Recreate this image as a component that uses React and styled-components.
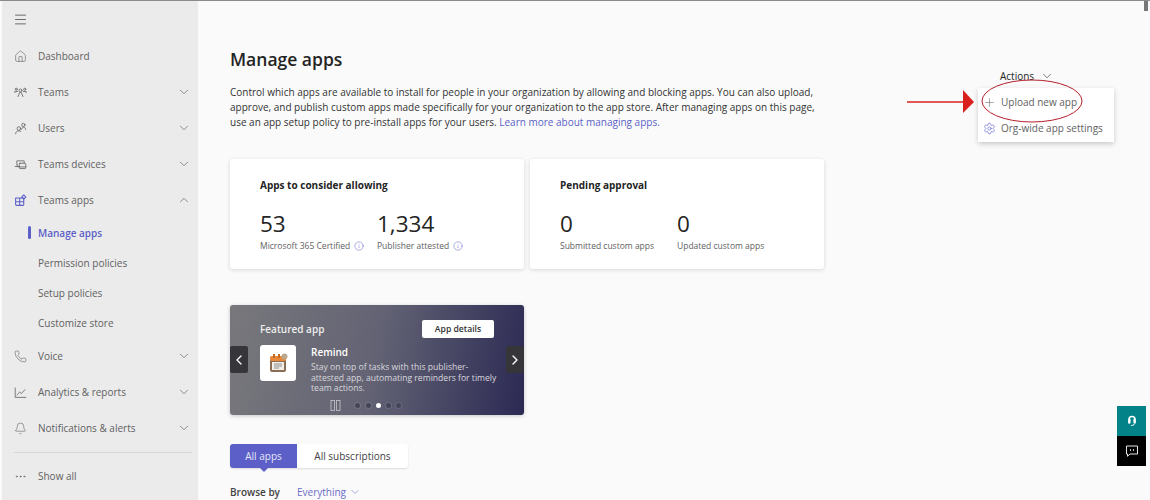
import React from 'react'
import styled, { createGlobalStyle } from 'styled-components'
import { ChevronDown, ChevronUp, ChevronLeft, ChevronRight, Home, Phone, Bell, Plus, Settings, Info, Menu, MoreHorizontal } from 'lucide-react'

const GlobalStyle = createGlobalStyle`
  html, body { margin: 0; padding: 0; height: 100%; overflow: hidden; }
  body { font-family: "Open Sans", "Noto Sans", sans-serif; color: #242424; background: #fafafa; }
`

const Page = styled.div`
  width: 1150px;
  height: 500px;
  display: flex;
  position: relative;
  overflow: hidden;
  border-top: 1px solid #8a8a8a;
  box-sizing: border-box;
`

const Sidebar = styled.nav`
  width: 196px;
  margin-left: 2px;
  flex-shrink: 0;
  background: #ebebeb;
  padding: 9px 0 0 0;
  box-sizing: border-box;
`

const MenuButton = styled.div`
  height: 18px;
  padding-left: 11px;
  margin-bottom: 10px;
  display: flex;
  align-items: center;
  color: #424242;
`

const NavRow = styled.div`
  height: 36px;
  display: flex;
  align-items: center;
  padding: 0 7px 0 12px;
  font-size: 10px;
  color: #616161;
`

const NavIcon = styled.span`
  width: 24px;
  display: flex;
  align-items: center;
  color: ${p => (p.$active ? '#5b5fc7' : '#616161')};
`

const NavLabel = styled.span`
  flex: 1;
`

const SubRow = styled.div`
  height: 30px;
  display: flex;
  align-items: center;
  padding-left: 36px;
  font-size: 10px;
  position: relative;
  color: ${p => (p.$active ? '#5b5fc7' : '#616161')};
  font-weight: ${p => (p.$active ? 600 : 400)};
`

const ActiveBar = styled.span`
  position: absolute;
  left: 26px;
  top: 8px;
  width: 3px;
  height: 13px;
  border-radius: 2px;
  background: #5b5fc7;
`

const Divider = styled.div`
  height: 1px;
  background: #d6d6d6;
  margin: 6px 6px 5px 12px;
`

const Main = styled.main`
  flex: 1;
  padding: 46px 0 0 32px;
  min-width: 0;
`

const Title = styled.h1`
  margin: 0 0 14px;
  font-size: 17.5px;
  line-height: 24px;
  font-weight: 600;
`

const Intro = styled.p`
  margin: 0 0 29px;
  width: 600px;
  font-size: 10px;
  line-height: 15px;
  color: #333;
`

const IntroLink = styled.span`
  color: #5b5fc7;
`

const CardRow = styled.div`
  display: flex;
  gap: 6px;
  margin-bottom: 36px;
`

const Card = styled.section`
  width: 294px;
  height: 110px;
  background: #fff;
  border-radius: 3px;
  box-shadow: 0 1px 4px rgba(0, 0, 0, 0.14);
  padding: 19px 30px 0;
  box-sizing: border-box;
`

const CardTitle = styled.h2`
  margin: 0 0 17px;
  font-size: 10px;
  line-height: 14px;
  font-weight: 700;
`

const Stats = styled.div`
  display: flex;
`

const Stat = styled.div`
  width: ${p => p.$w}px;
`

const StatValue = styled.div`
  font-size: 22.5px;
  line-height: 30px;
  font-weight: 500;
  color: #242424;
`

const StatLabel = styled.div`
  display: flex;
  align-items: center;
  gap: 4px;
  margin-top: 1px;
  font-size: 8.5px;
  line-height: 12px;
  color: #616161;
  white-space: nowrap;
`

const InfoMark = styled(Info)`
  color: #5b5fc7;
`

const Featured = styled.section`
  width: 294px;
  height: 110px;
  border-radius: 3px;
  background: linear-gradient(100deg, #78787c 0%, #626274 50%, #2b2953 100%);
  box-shadow: 0 1px 4px rgba(0, 0, 0, 0.2);
  box-sizing: border-box;
  padding: 15px 30px 0;
  position: relative;
  color: #fff;
  margin-bottom: 28px;
`

const FeaturedHead = styled.div`
  display: flex;
  justify-content: space-between;
  align-items: center;
  margin-bottom: 6px;
`

const FeaturedTitle = styled.span`
  font-size: 10px;
  font-weight: 600;
  color: #eee;
`

const DetailsButton = styled.div`
  width: 72px;
  height: 18px;
  background: #fff;
  border-radius: 2px;
  color: #333;
  font-size: 8.6px;
  font-weight: 600;
  display: flex;
  align-items: center;
  justify-content: center;
`

const FeaturedBody = styled.div`
  display: flex;
  gap: 15px;
`

const AppTile = styled.div`
  width: 36px;
  height: 36px;
  margin-top: 1px;
  border-radius: 3px;
  background: #fff;
  flex-shrink: 0;
  display: flex;
  align-items: center;
  justify-content: center;
`

const AppName = styled.div`
  font-size: 10px;
  line-height: 12px;
  font-weight: 600;
  margin: 2px 0 4px;
`

const AppText = styled.div`
  font-size: 8.6px;
  line-height: 10.5px;
  color: #d8d8de;
  width: 190px;
`

const Arrow = styled.div`
  position: absolute;
  top: 41px;
  ${p => (p.$right ? 'right: 0;' : 'left: 0;')}
  width: 18px;
  height: 27px;
  background: #35353a;
  border-radius: 2px;
  display: flex;
  align-items: center;
  justify-content: center;
`

const Pager = styled.div`
  position: absolute;
  left: 100px;
  bottom: 4px;
  display: flex;
  align-items: center;
  gap: 5.3px;
`

const PauseMark = styled.svg`
  margin-right: 9px;
`

const Dot = styled.span`
  width: 5px;
  height: 5px;
  border-radius: 50%;
  background: ${p => (p.$on ? '#fff' : '#454558')};
  box-shadow: ${p => (p.$on ? 'none' : '0 0 0 1px rgba(255, 255, 255, 0.1)')};
`

const Tabs = styled.div`
  display: inline-flex;
  height: 24px;
  background: #fff;
  border-radius: 3px;
  box-shadow: 0 1px 2px rgba(0, 0, 0, 0.12);
  position: relative;
  margin-bottom: 17px;
`

const Tab = styled.div`
  width: ${p => p.$w}px;
  display: flex;
  align-items: center;
  justify-content: center;
  font-size: 10px;
  border-radius: ${p => (p.$on ? '3px 0 0 3px' : '0 3px 3px 0')};
  background: ${p => (p.$on ? '#5b5fc7' : 'transparent')};
  color: ${p => (p.$on ? '#e6e6f7' : '#424242')};
  position: relative;
  &::after {
    content: ${p => (p.$on ? "''" : 'none')};
    position: absolute;
    left: 50%;
    bottom: -4px;
    margin-left: -4px;
    border: 4px solid transparent;
    border-bottom: 0;
    border-top-color: #5b5fc7;
  }
`

const BrowseRow = styled.div`
  display: flex;
  align-items: center;
  font-size: 10px;
`

const BrowseLabel = styled.span`
  font-weight: 600;
  width: 67px;
  color: #424242;
`

const BrowseValue = styled.span`
  display: flex;
  align-items: center;
  gap: 3px;
  color: #6a6dc9;
`

const ActionsToggle = styled.div`
  position: absolute;
  left: 1000px;
  top: 68px;
  display: flex;
  align-items: center;
  gap: 6px;
  font-size: 10px;
  color: #242424;
`

const Dropdown = styled.div`
  position: absolute;
  left: 978px;
  top: 87px;
  width: 136px;
  height: 54px;
  background: #fff;
  box-shadow: 0 2px 5px rgba(0, 0, 0, 0.2);
  box-sizing: border-box;
  padding-top: 1px;
`

const DropItem = styled.div`
  height: 26px;
  display: flex;
  align-items: center;
  gap: 5px;
  padding-left: 5px;
  font-size: 10px;
  color: #616161;
  white-space: nowrap;
`

const Callout = styled.svg`
  position: absolute;
  left: 900px;
  top: 76px;
`

const Floating = styled.div`
  position: absolute;
  left: 1117px;
  top: 405px;
  width: 29px;
`

const FloatButton = styled.div`
  height: 30px;
  display: flex;
  align-items: center;
  justify-content: center;
  color: #fff;
  background: ${p => p.$bg};
`

const ScrollThumb = styled.div`
  position: absolute;
  left: 1144px;
  top: 0;
  width: 4px;
  height: 10px;
  background: #777;
`

const Line = ({ children, size = 13 }) => (
  <svg width={size} height={size} viewBox="0 0 16 16" fill="none" stroke="currentColor" strokeWidth="1" strokeLinecap="round" strokeLinejoin="round">
    {children}
  </svg>
)

const TeamsIcon = () => (
  <Line>
    <circle cx="8" cy="5.5" r="1.8" />
    <path d="M5 13l2-5h2l2 5" />
    <circle cx="2.8" cy="4" r="1.3" />
    <circle cx="13.2" cy="4" r="1.3" />
    <path d="M1 8V6.8h3.4M15 8V6.8h-3.4" />
  </Line>
)

const UsersIcon = () => (
  <Line>
    <circle cx="6" cy="8" r="2.2" />
    <path d="M2 14.5c0-2.4 1.6-3.6 4-3.6 1 0 1.8.2 2.4.6" />
    <circle cx="11.5" cy="3.6" r="2" />
    <path d="M9.5 9c.3-1.6 1-2.6 2-2.6 1.6 0 2.8 1 2.8 2.8" />
  </Line>
)

const DevicesIcon = () => (
  <Line>
    <path d="M3.5 8V3.5h9V6" />
    <path d="M1.5 10.5h5M4 8.5v2" />
    <rect x="6.5" y="6.5" width="8" height="6.5" rx="1" />
    <path d="M6.5 11h8" />
  </Line>
)

const AppsIcon = () => (
  <Line>
    <path d="M2 5h5v4.5H2zM2 9.5h5V14H3a1 1 0 0 1-1-1zM7 9.5h5V13a1 1 0 0 1-1 1H7zM7 5h5v4.5H7z" strokeWidth="1.3" />
    <path d="M12 1.2l2.6 2.6L12 6.4 9.4 3.8z" strokeWidth="1.3" />
  </Line>
)

const ChartIcon = () => (
  <Line>
    <path d="M1.5 2.5V14h13" />
    <path d="M3.5 11l3.5-3.5 2 1.7 4.500-4.700" />
  </Line>
)

const NAV_TOP = [
  { label: 'Dashboard', icon: <Home size={13} strokeWidth={1.1} />, noChevron: true },
  { label: 'Teams', icon: <TeamsIcon /> },
  { label: 'Users', icon: <UsersIcon /> },
  { label: 'Teams devices', icon: <DevicesIcon /> },
]

const NAV_BOTTOM = [
  { label: 'Voice', icon: <Phone size={13} strokeWidth={1.1} /> },
  { label: 'Analytics & reports', icon: <ChartIcon /> },
  { label: 'Notifications & alerts', icon: <Bell size={13} strokeWidth={1.1} /> },
]

const NavItem = ({ item }) => (
  <NavRow>
    <NavIcon>{item.icon}</NavIcon>
    <NavLabel>{item.label}</NavLabel>
    {!item.noChevron && <ChevronDown size={14} strokeWidth={1.2} />}
  </NavRow>
)

const RemindIcon = () => (
  <svg width="22" height="22" viewBox="0 0 22 22">
    <rect x="3" y="5" width="16" height="15" rx="2" fill="#8a6d52" />
    <rect x="5" y="10" width="12" height="8" fill="#f2efe9" />
    <rect x="3" y="4" width="16" height="5" rx="1.5" fill="#e8893a" />
    <rect x="6" y="2" width="2" height="4" fill="#c46a22" />
    <rect x="11" y="2" width="2" height="4" fill="#c46a22" />
    <circle cx="17.5" cy="4.5" r="3" fill="#b9a78f" />
    <path d="M7 12h8M7 14h8M7 16h5" stroke="#777" strokeWidth="0.8" />
  </svg>
)

const HeadsetIcon = () => (
  <svg width="14" height="14" viewBox="0 0 14 14" fill="none" stroke="#fff" strokeLinecap="round">
    <path d="M4 9V5.5a3 3 0 0 1 6 0V8" strokeWidth="1.5" />
    <path d="M4.5 5.5v3M9.5 5.5v3" strokeWidth="2.2" />
    <path d="M10 8.5c0 2-1.5 3-3.5 3" strokeWidth="1" />
  </svg>
)

const ChatIcon = () => (
  <svg width="14" height="14" viewBox="0 0 14 14" fill="none" stroke="#fff" strokeWidth="0.9" strokeLinejoin="round">
    <path d="M1.5 2h11v8H5l-2.5 2.3V10h-1z" />
    <path d="M5 6h1M8 6h1" strokeWidth="1.3" />
  </svg>
)

export default function App() {
  return (
    <Page>
      <GlobalStyle />
      <Sidebar>
        <MenuButton><Menu size={15} strokeWidth={1.2} /></MenuButton>
        {NAV_TOP.map(item => <NavItem key={item.label} item={item} />)}
        <NavRow>
          <NavIcon $active><AppsIcon /></NavIcon>
          <NavLabel>Teams apps</NavLabel>
          <ChevronUp size={14} strokeWidth={1.2} />
        </NavRow>
        <SubRow $active><ActiveBar />Manage apps</SubRow>
        <SubRow>Permission policies</SubRow>
        <SubRow>Setup policies</SubRow>
        <SubRow>Customize store</SubRow>
        {NAV_BOTTOM.map(item => <NavItem key={item.label} item={item} />)}
        <Divider />
        <NavItem item={{ label: 'Show all', icon: <MoreHorizontal size={13} strokeWidth={1.2} />, noChevron: true }} />
      </Sidebar>

      <Main>
        <Title>Manage apps</Title>
        <Intro>
          Control which apps are available to install for people in your organization by allowing and blocking apps. You can also upload,
          approve, and publish custom apps made specifically for your organization to the app store. After managing apps on this page,
          use an app setup policy to pre-install apps for your users. <IntroLink>Learn more about managing apps.</IntroLink>
        </Intro>

        <CardRow>
          <Card>
            <CardTitle>Apps to consider allowing</CardTitle>
            <Stats>
              <Stat $w={117}>
                <StatValue>53</StatValue>
                <StatLabel>Microsoft 365 Certified <InfoMark size={10} strokeWidth={1.2} /></StatLabel>
              </Stat>
              <Stat $w={110}>
                <StatValue>1,334</StatValue>
                <StatLabel>Publisher attested <InfoMark size={10} strokeWidth={1.2} /></StatLabel>
              </Stat>
            </Stats>
          </Card>
          <Card>
            <CardTitle>Pending approval</CardTitle>
            <Stats>
              <Stat $w={117}>
                <StatValue>0</StatValue>
                <StatLabel>Submitted custom apps</StatLabel>
              </Stat>
              <Stat $w={110}>
                <StatValue>0</StatValue>
                <StatLabel>Updated custom apps</StatLabel>
              </Stat>
            </Stats>
          </Card>
        </CardRow>

        <Featured>
          <FeaturedHead>
            <FeaturedTitle>Featured app</FeaturedTitle>
            <DetailsButton>App details</DetailsButton>
          </FeaturedHead>
          <FeaturedBody>
            <AppTile><RemindIcon /></AppTile>
            <div>
              <AppName>Remind</AppName>
              <AppText>Stay on top of tasks with this publisher-attested app, automating reminders for timely team actions.</AppText>
            </div>
          </FeaturedBody>
          <Arrow><ChevronLeft size={16} strokeWidth={2} /></Arrow>
          <Arrow $right><ChevronRight size={16} strokeWidth={2} /></Arrow>
          <Pager>
            <PauseMark width="11" height="11" viewBox="0 0 11 11" fill="none" stroke="#c8c8cc" strokeWidth="0.8">
              <rect x="1" y="0.5" width="3.5" height="10" />
              <rect x="6.5" y="0.5" width="3.5" height="10" />
            </PauseMark>
            <Dot /><Dot /><Dot $on /><Dot /><Dot />
          </Pager>
        </Featured>

        <Tabs>
          <Tab $on $w={67}>All apps</Tab>
          <Tab $w={111}>All subscriptions</Tab>
        </Tabs>
        <BrowseRow>
          <BrowseLabel>Browse by</BrowseLabel>
          <BrowseValue>Everything <ChevronDown size={12} strokeWidth={1.2} /></BrowseValue>
        </BrowseRow>
      </Main>

      <ActionsToggle>Actions <ChevronDown size={14} strokeWidth={1} /></ActionsToggle>
      <Dropdown>
        <DropItem><Plus size={13} strokeWidth={1} />Upload new app</DropItem>
        <DropItem><Settings size={13} strokeWidth={1.2} color="#5b5fc7" />Org-wide app settings</DropItem>
      </Dropdown>
      <Callout width="190" height="50" viewBox="0 0 190 50">
        <ellipse cx="132" cy="24" rx="50" ry="21" fill="none" stroke="#b3202a" strokeWidth="1" />
        <path d="M7 25H66" stroke="#d8201c" strokeWidth="1.5" />
        <path d="M63 13L74 25L63 36Z" fill="#d8201c" />
      </Callout>

      <Floating>
        <FloatButton $bg="#038387"><HeadsetIcon /></FloatButton>
        <FloatButton $bg="#000"><ChatIcon /></FloatButton>
      </Floating>
      <ScrollThumb />
    </Page>
  )
}
